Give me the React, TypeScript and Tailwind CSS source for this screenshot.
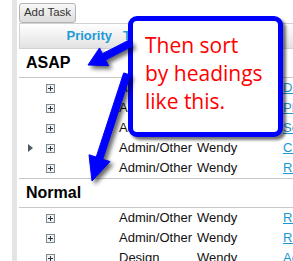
import React from 'react'

type Row = { cat: string; owner: string; link: string; current?: boolean }

const asapRows: Row[] = [
  { cat: 'Admin/Other', owner: 'Wendy', link: 'Document' },
  { cat: 'Admin/Other', owner: 'Wendy', link: 'Plan' },
  { cat: 'Admin/Other', owner: 'Wendy', link: 'Send' },
  { cat: 'Admin/Other', owner: 'Wendy', link: 'Create', current: true },
  { cat: 'Admin/Other', owner: 'Wendy', link: 'Review' },
]

const normalRows: Row[] = [
  { cat: 'Admin/Other', owner: 'Wendy', link: 'Review' },
  { cat: 'Admin/Other', owner: 'Wendy', link: 'Review' },
  { cat: 'Design', owner: 'Wendy', link: 'Add' },
]

function ExpandIcon() {
  return (
    <svg width="9" height="9" viewBox="0 0 9 9" className="block">
      <rect x="0.5" y="0.5" width="8" height="8" fill="#eef1f3" stroke="#7d888e" />
      <path d="M2 4.5h5M4.5 2v5" stroke="#2d3336" strokeWidth="1" />
    </svg>
  )
}

function TaskRow({ row }: { row: Row }) {
  return (
    <div className="flex h-[20px] items-center text-[13px] text-[#111]">
      <div className="w-[27px] shrink-0">
        {row.current ? (
          <div className="ml-[9px] h-0 w-0 border-y-[4px] border-l-[5px] border-y-transparent border-l-[#4d5b63]" />
        ) : null}
      </div>
      <div className="w-[73px] shrink-0">
        <ExpandIcon />
      </div>
      <div className="w-[78px] shrink-0 whitespace-nowrap">{row.cat}</div>
      <div className="w-[86px] shrink-0 whitespace-nowrap">{row.owner}</div>
      <div className="whitespace-nowrap text-[#1b96d4] underline">{row.link}</div>
    </div>
  )
}

function GroupRow({ label }: { label: string }) {
  return (
    <div className="flex h-[29px] items-center border-b border-[#c8c8c8] pl-[7px] text-[16px] font-bold text-black">
      {label}
    </div>
  )
}

export default function App() {
  return (
    <div className="relative h-[261px] w-[293px] overflow-hidden bg-white font-['Liberation_Sans',Arial,sans-serif]">
      <div className="flex h-full">
        <div className="w-[12px] shrink-0" />
        <div className="w-[5px] shrink-0 bg-[#e4e4e4]" />
        <div className="w-[2px] shrink-0" />
        <div className="min-w-0 flex-1">
          <button className="mt-[3px] flex h-[20px] w-[57px] items-center justify-center rounded-[3px] border border-[#b4b4b4] bg-gradient-to-b from-[#f8f8f8] to-[#dcdcdc] text-[11.5px] text-[#333]">
            Add Task
          </button>
          <div className="flex h-[26px] items-center border-b border-l border-t border-[#d2d2d2] bg-gradient-to-b from-white to-[#e2e2e2] text-[13px] font-bold text-[#1f9ad6]">
            <div className="w-[100px] shrink-0 pr-[8px] text-right">Priority</div>
            <div className="pl-[3px]">Type</div>
          </div>
          <GroupRow label="ASAP" />
          {asapRows.map((r, i) => (
            <TaskRow key={i} row={r} />
          ))}
          <div className="border-b border-[#c8c8c8]" />
          <GroupRow label="Normal" />
          {normalRows.map((r, i) => (
            <TaskRow key={i} row={r} />
          ))}
        </div>
      </div>

      {/* callout */}
      <div className="absolute left-[128px] top-[16px] h-[121px] w-[155px] rounded-[9px] border-[5px] border-[#0000ff] bg-white pl-[12px] pt-[10px] font-['Open_Sans',sans-serif] text-[21px] leading-[28px] text-[#ff0000] shadow-[3px_3px_3px_rgba(0,0,0,0.55)]">
        Then sort
        <br />
        by headings
        <br />
        like this.
      </div>

      <svg
        width="293"
        height="261"
        className="pointer-events-none absolute left-0 top-0 drop-shadow-[3px_3px_2px_rgba(0,0,0,0.6)]"
      >
        <polygon
          points="129.4,39.9 102.4,53.7 99.5,47.9 88,65 108.6,65.7 105.6,59.9 132.6,46.1"
          fill="#0000ff"
          stroke="#0000ff"
          strokeLinejoin="round"
        />
        <polygon
          points="123.7,72.9 96.2,157.1 89,154.8 92,181 110,161.6 102.8,159.3 130.3,75.1"
          fill="#0000ff"
          stroke="#0000ff"
          strokeLinejoin="round"
        />
      </svg>
    </div>
  )
}
